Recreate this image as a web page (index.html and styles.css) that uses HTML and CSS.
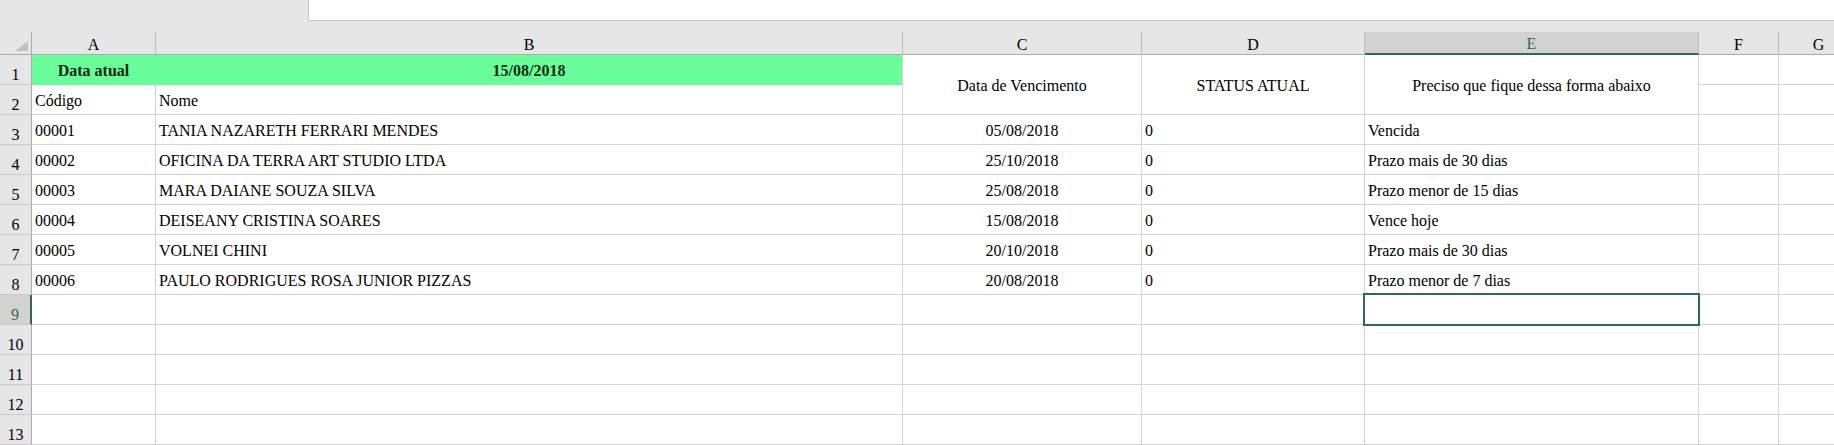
FILE: index.html
```html
<!DOCTYPE html>
<html lang="pt">
<head>
<meta charset="utf-8">
<title>Planilha</title>
<link rel="stylesheet" href="styles.css">
</head>
<body>
<div class="topbar">
  <div class="topbar-left"></div>
  <div class="formula"></div>
</div>
<div class="band"></div>
<div class="sheet">
  <div class="cell corner"><svg width="13" height="10" viewBox="0 0 13 10"><polygon points="13,0 13,10 0,10" fill="#c2c2c2"/></svg></div>
  <div class="cell col-head">A</div>
  <div class="cell col-head">B</div>
  <div class="cell col-head">C</div>
  <div class="cell col-head">D</div>
  <div class="cell col-head sel-col">E</div>
  <div class="cell col-head">F</div>
  <div class="cell col-head">G</div>

  <div class="cell row-head">1</div>
  <div class="cell fill fill-a bold center">Data atual</div>
  <div class="cell fill bold center">15/08/2018</div>
  <div class="cell span2 middle">Data de Vencimento</div>
  <div class="cell span2 middle">STATUS ATUAL</div>
  <div class="cell span2 middle">Preciso que fique dessa forma abaixo</div>
  <div class="cell"></div>
  <div class="cell"></div>

  <div class="cell row-head">2</div>
  <div class="cell">Código</div>
  <div class="cell">Nome</div>
  <div class="cell"></div>
  <div class="cell"></div>

  <div class="cell row-head">3</div>
  <div class="cell">00001</div>
  <div class="cell">TANIA NAZARETH FERRARI MENDES</div>
  <div class="cell center">05/08/2018</div>
  <div class="cell">0</div>
  <div class="cell">Vencida</div>
  <div class="cell"></div>
  <div class="cell"></div>

  <div class="cell row-head">4</div>
  <div class="cell">00002</div>
  <div class="cell">OFICINA DA TERRA ART STUDIO LTDA</div>
  <div class="cell center">25/10/2018</div>
  <div class="cell">0</div>
  <div class="cell">Prazo mais de 30 dias</div>
  <div class="cell"></div>
  <div class="cell"></div>

  <div class="cell row-head">5</div>
  <div class="cell">00003</div>
  <div class="cell">MARA DAIANE SOUZA SILVA</div>
  <div class="cell center">25/08/2018</div>
  <div class="cell">0</div>
  <div class="cell">Prazo menor de 15 dias</div>
  <div class="cell"></div>
  <div class="cell"></div>

  <div class="cell row-head">6</div>
  <div class="cell">00004</div>
  <div class="cell">DEISEANY CRISTINA SOARES</div>
  <div class="cell center">15/08/2018</div>
  <div class="cell">0</div>
  <div class="cell">Vence hoje</div>
  <div class="cell"></div>
  <div class="cell"></div>

  <div class="cell row-head">7</div>
  <div class="cell">00005</div>
  <div class="cell">VOLNEI CHINI</div>
  <div class="cell center">20/10/2018</div>
  <div class="cell">0</div>
  <div class="cell">Prazo mais de 30 dias</div>
  <div class="cell"></div>
  <div class="cell"></div>

  <div class="cell row-head">8</div>
  <div class="cell">00006</div>
  <div class="cell">PAULO RODRIGUES ROSA JUNIOR PIZZAS</div>
  <div class="cell center">20/08/2018</div>
  <div class="cell">0</div>
  <div class="cell">Prazo menor de 7 dias</div>
  <div class="cell"></div>
  <div class="cell"></div>

  <div class="cell row-head sel-row">9</div>
  <div class="cell"></div>
  <div class="cell"></div>
  <div class="cell"></div>
  <div class="cell"></div>
  <div class="cell active"><span class="selbox"></span></div>
  <div class="cell"></div>
  <div class="cell"></div>

  <div class="cell row-head">10</div>
  <div class="cell"></div><div class="cell"></div><div class="cell"></div><div class="cell"></div><div class="cell"></div><div class="cell"></div><div class="cell"></div>

  <div class="cell row-head">11</div>
  <div class="cell"></div><div class="cell"></div><div class="cell"></div><div class="cell"></div><div class="cell"></div><div class="cell"></div><div class="cell"></div>

  <div class="cell row-head">12</div>
  <div class="cell"></div><div class="cell"></div><div class="cell"></div><div class="cell"></div><div class="cell"></div><div class="cell"></div><div class="cell"></div>

  <div class="cell row-head">13</div>
  <div class="cell"></div><div class="cell"></div><div class="cell"></div><div class="cell"></div><div class="cell"></div><div class="cell"></div><div class="cell"></div>
</div>
</body>
</html>
```

FILE: styles.css
```css
* {
  box-sizing: border-box;
}

html,
body {
  margin: 0;
  padding: 0;
}

body {
  width: 1834px;
  height: 445px;
  overflow: hidden;
  background: #e6e6e6;
  font-family: "Liberation Serif", "Times New Roman", serif;
  font-size: 16px;
  color: #000;
}

.topbar {
  display: flex;
  height: 21px;
}

.topbar-left {
  width: 308px;
  background: #e6e6e6;
}

.formula {
  flex: 1;
  background: #fff;
  border-left: 1px solid #c6c6c6;
  border-bottom: 1px solid #c6c6c6;
}

.band {
  height: 11px;
  background: #e6e6e6;
}

.sheet {
  display: grid;
  grid-template-columns: 32px 124px 747px 239px 223px 334px 80px 80px;
  grid-template-rows: 23px repeat(13, 30px);
  width: 1859px;
  background: #fff;
}

.cell {
  display: flex;
  align-items: flex-end;
  padding: 0 3px 4px;
  line-height: 18px;
  white-space: nowrap;
  overflow: visible;
  border-right: 1px solid #d4d4d4;
  border-bottom: 1px solid #d4d4d4;
}

.corner {
  background: #e6e6e6;
  justify-content: flex-end;
  padding: 0 3px 3px 0;
  border-right: 1px solid #ababab;
  border-bottom: 1px solid #ababab;
}

.corner svg {
  display: block;
}

.col-head {
  background: #e6e6e6;
  justify-content: center;
  padding: 0;
  border-right: 1px solid #bdbdbd;
  border-bottom: 1px solid #ababab;
}

.col-head.sel-col {
  background: #d2d2d2;
  color: #2f6b4c;
  border-bottom: 2px solid #2f6a50;
}

.row-head {
  background: #e6e6e6;
  justify-content: center;
  padding: 0;
  border-right: 1px solid #ababab;
  border-bottom: 1px solid #c9c9c9;
}

.row-head.sel-row {
  background: #d2d2d2;
  color: #2f6b4c;
  border-right: 2px solid #2f6a50;
}

.fill {
  background: #69fe9a;
  border-bottom-color: #69fe9a;
}

.fill-a {
  border-right-color: #69fe9a;
}

.bold {
  font-weight: bold;
  color: #0c2a12;
}

.center {
  justify-content: center;
}

.span2 {
  grid-row: span 2;
}

.middle {
  justify-content: center;
  align-items: center;
  padding: 3px 3px 0;
}

.active {
  position: relative;
}

.selbox {
  position: absolute;
  top: -2px;
  left: -2px;
  right: -2px;
  bottom: -2px;
  border: 2px solid #2f6a50;
}
```
